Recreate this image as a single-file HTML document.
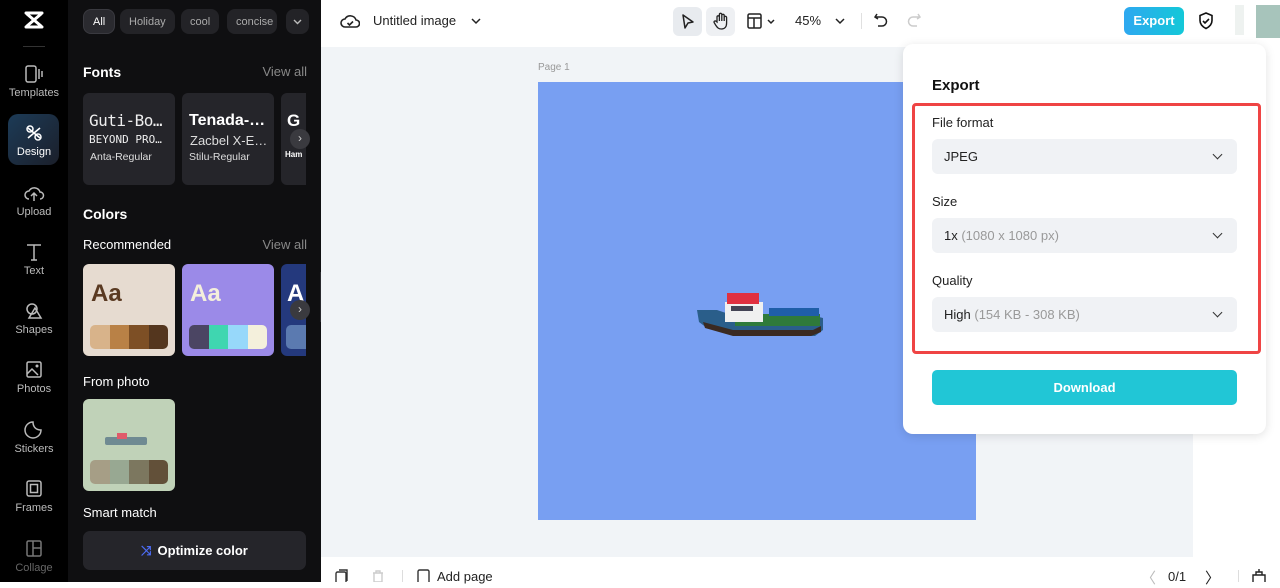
<!DOCTYPE html>
<html><head><meta charset="utf-8"><style>
*{box-sizing:border-box;margin:0;padding:0}
body{width:1280px;height:582px;overflow:hidden;font-family:"Liberation Sans",sans-serif;background:#fff;position:relative}
.abs{position:absolute}
.rail{left:0;top:0;width:68px;height:582px;background:#000}
.ri{position:absolute;left:0;width:68px;text-align:center;color:#bbb;font-size:11px}
.ri svg{display:block;margin:0 auto 4px}
.panel{left:68px;top:0;width:253px;height:582px;background:#0f0f11;color:#fff}
.chip{position:absolute;top:9px;height:25px;border-radius:8px;background:#232327;color:#aaa;font-size:11px;display:flex;align-items:center;padding:0 9px;white-space:nowrap}
.h{position:absolute;font-weight:bold;font-size:14px;color:#fff}
.va{position:absolute;right:14px;font-size:13px;color:#888}
.card{position:absolute;width:92px;height:92px;border-radius:6px;background:#25252a}
.pal{position:absolute;left:7px;bottom:7px;width:78px;height:24px;border-radius:5px;overflow:hidden;display:flex}
.pal i{flex:1}
.sel{position:absolute;left:932px;width:305px;height:35px;background:#f0f2f5;border-radius:6px;font-size:13px;color:#222;line-height:35px;padding-left:12px}
.sel:after{content:"";position:absolute;right:16px;top:12px;width:6px;height:6px;border-right:1.6px solid #333;border-bottom:1.6px solid #333;transform:rotate(45deg)}
.lab{position:absolute;left:932px;font-size:13px;color:#222}
.g{color:#999}
</style></head><body>
<div class="abs rail">
 <svg class="abs" style="left:22px;top:10px" width="24" height="20" viewBox="0 0 24 20"><path d="M4 3h16M4 17h16M5 4L19 16M19 4L5 16" stroke="#fff" stroke-width="3" fill="none" stroke-linecap="round"/></svg>
 <div class="abs" style="left:23px;top:46px;width:22px;height:1px;background:#333"></div>
 <div class="ri" style="top:65px"><svg width="20" height="18"><rect x="2" y="1" width="10" height="16" rx="2" stroke="#bbb" fill="none" stroke-width="1.5"/><path d="M15 4v10M18 6v6" stroke="#bbb" stroke-width="1.5"/></svg>Templates</div>
 <div class="abs" style="left:8px;top:114px;width:51px;height:51px;border-radius:10px;background:linear-gradient(135deg,#1c3b57,#1b1f2a)"></div>
 <div class="ri" style="top:124px;color:#fff"><svg width="20" height="18"><path d="M4 4l12 10M16 4L4 14" stroke="#fff" stroke-width="1.6"/><circle cx="6" cy="5" r="3" stroke="#fff" fill="none" stroke-width="1.5"/><circle cx="14" cy="13" r="3" stroke="#fff" fill="none" stroke-width="1.5"/></svg>Design</div>
 <div class="ri" style="top:184px"><svg width="22" height="18"><path d="M6 15a4 4 0 0 1 0-8 6 6 0 0 1 11 1 3.5 3.5 0 0 1 0 7M11 9v8M8 12l3-3 3 3" stroke="#bbb" fill="none" stroke-width="1.5"/></svg>Upload</div>
 <div class="ri" style="top:243px"><svg width="20" height="18"><path d="M3 2h14M10 2v15M7 17h6" stroke="#bbb" stroke-width="1.5"/></svg>Text</div>
 <div class="ri" style="top:302px"><svg width="20" height="18"><circle cx="8" cy="7" r="5" stroke="#bbb" fill="none" stroke-width="1.5"/><path d="M11 6l6 10H5z" stroke="#bbb" fill="none" stroke-width="1.5"/></svg>Shapes</div>
 <div class="ri" style="top:361px"><svg width="20" height="18"><rect x="3" y="1" width="14" height="15" rx="1.5" stroke="#bbb" fill="none" stroke-width="1.5"/><path d="M3 13l5-5 6 6" stroke="#bbb" fill="none" stroke-width="1.5"/><circle cx="13" cy="5" r="1.5" fill="#bbb"/></svg>Photos</div>
 <div class="ri" style="top:421px"><svg width="20" height="18"><path d="M17 9a8 8 0 1 1-8-8c0 5 3 8 8 8z" stroke="#bbb" fill="none" stroke-width="1.5"/></svg>Stickers</div>
 <div class="ri" style="top:480px"><svg width="20" height="18"><rect x="3" y="1" width="14" height="15" rx="2" stroke="#bbb" fill="none" stroke-width="1.5"/><rect x="6.5" y="4.5" width="7" height="8" stroke="#bbb" fill="none" stroke-width="1.5"/></svg>Frames</div>
 <div class="ri" style="top:540px;color:#666"><svg width="20" height="18"><rect x="3" y="1" width="14" height="15" rx="1.5" stroke="#777" fill="none" stroke-width="1.5"/><path d="M9 1v15M9 8h8" stroke="#777" stroke-width="1.5"/></svg>Collage</div>
</div>
<div class="abs panel">
 <div class="chip" style="left:15px;background:#2a2a2f;color:#fff;border:1px solid #3a3a40">All</div>
 <div class="chip" style="left:52px">Holiday</div>
 <div class="chip" style="left:113px">cool</div>
 <div class="chip" style="left:159px;width:50px;overflow:hidden">concise</div>
 <div class="chip" style="left:218px;width:23px;padding:0"><svg width="23" height="25"><path d="M8 11l3.5 3.5L15 11" stroke="#bbb" fill="none" stroke-width="1.4"/></svg></div>
 <div class="h" style="left:15px;top:64px">Fonts</div><div class="va" style="top:64px">View all</div>
 <div class="card" style="left:15px;top:93px"><div style="position:absolute;left:6px;top:18px;font-family:'DejaVu Sans Mono';font-size:16px;color:#eee;letter-spacing:-0.5px">Guti-Bo…</div><div style="position:absolute;left:6px;top:40px;font-family:'DejaVu Sans Mono';font-size:11px;color:#eee">BEYOND PRO…</div><div style="position:absolute;left:7px;top:58px;font-size:10.5px;color:#ddd">Anta-Regular</div></div>
 <div class="card" style="left:114px;top:93px"><div style="position:absolute;left:7px;top:19px;font-weight:bold;font-size:16px;color:#fff">Tenada-…</div><div style="position:absolute;left:8px;top:40px;font-size:13px;color:#ddd">Zacbel X-E…</div><div style="position:absolute;left:7px;top:58px;font-size:10.5px;color:#ddd">Stilu-Regular</div></div>
 <div class="card" style="left:213px;top:93px;width:25px;border-radius:6px 0 0 6px;overflow:hidden"><div style="position:absolute;left:6px;top:18px;font-weight:bold;font-size:17px">G</div><div style="position:absolute;left:4px;top:57px;font-size:8px;font-weight:bold">Ham</div></div>
 <div class="abs" style="left:222px;top:129px;width:20px;height:20px;border-radius:10px;background:#3a3a3f;color:#ccc;font-size:12px;text-align:center;line-height:19px">›</div>
 <div class="h" style="left:15px;top:206px">Colors</div>
 <div class="abs" style="left:15px;top:237px;font-size:13px">Recommended</div><div class="va" style="top:237px">View all</div>
 <div class="card" style="left:15px;top:264px;background:#e6dbd0"><div style="position:absolute;left:8px;top:16px;font-size:24px;font-weight:bold;color:#5a3a22">Aa</div><div class="pal"><i style="background:#d8b38a"></i><i style="background:#b98146"></i><i style="background:#7d4f25"></i><i style="background:#54361e"></i></div></div>
 <div class="card" style="left:114px;top:264px;background:#9b8ae8"><div style="position:absolute;left:8px;top:16px;font-size:24px;font-weight:bold;color:#f4efdc">Aa</div><div class="pal"><i style="background:#4b4563"></i><i style="background:#3fd6b0"></i><i style="background:#97d8fa"></i><i style="background:#f4f0dc"></i></div></div>
 <div class="card" style="left:213px;top:264px;width:25px;background:#24397d;border-radius:6px 0 0 6px;overflow:hidden"><div style="position:absolute;left:6px;top:16px;font-size:24px;font-weight:bold">A</div><div style="position:absolute;left:5px;bottom:7px;width:20px;height:24px;background:#5b7ab0;border-radius:5px 0 0 5px"></div></div>
 <div class="abs" style="left:222px;top:300px;width:20px;height:20px;border-radius:10px;background:#3a3a3f;color:#ccc;font-size:12px;text-align:center;line-height:19px">›</div>
 <div class="abs" style="left:15px;top:374px;font-size:13px">From photo</div>
 <div class="card" style="left:15px;top:399px;background:#c0d2b8"><div style="position:absolute;left:22px;top:38px;width:42px;height:8px;background:#6f8a92;border-radius:2px"></div><div style="position:absolute;left:34px;top:34px;width:10px;height:6px;background:#e05a6a"></div><div class="pal"><i style="background:#a69e86"></i><i style="background:#98a892"></i><i style="background:#7c775f"></i><i style="background:#625039"></i></div></div>
 <div class="abs" style="left:15px;top:505px;font-size:13px">Smart match</div>
 <div class="abs" style="left:15px;top:531px;width:223px;height:39px;border-radius:7px;background:#25252a;text-align:center;line-height:39px;font-size:13px;font-weight:bold"><span style="color:#4c6cf5;margin-right:6px">⤨</span>Optimize color</div>
</div>
<div class="abs" style="left:320px;top:272px;width:8px;height:50px;background:#2a2a2e;border-radius:0 6px 6px 0"></div>
<svg class="abs" style="left:340px;top:12px" width="20" height="18"><path d="M5 15a4 4 0 0 1 0-8 6 6 0 0 1 11 1 3.5 3.5 0 0 1 0 7z" stroke="#222" fill="none" stroke-width="1.6"/><path d="M7.5 11l2 2 3.5-3.5" stroke="#222" fill="none" stroke-width="1.6"/></svg>
<div class="abs" style="left:373px;top:13px;font-size:13px;color:#222">Untitled image</div>
<svg class="abs" style="left:470px;top:15px" width="12" height="12"><path d="M2 4l4 4 4-4" stroke="#222" fill="none" stroke-width="1.5"/></svg>
<div class="abs" style="left:673px;top:7px;width:29px;height:29px;border-radius:6px;background:#e8ebef"></div>
<div class="abs" style="left:706px;top:7px;width:29px;height:29px;border-radius:6px;background:#eef0f3"></div>
<svg class="abs" style="left:680px;top:13px" width="16" height="17"><path d="M3 2l10 7-5 1-3 5z" stroke="#222" fill="none" stroke-width="1.5" stroke-linejoin="round"/></svg>
<svg class="abs" style="left:712px;top:11px" width="18" height="20"><path d="M5 11V6a1.2 1.2 0 0 1 2.4 0V10V3.5a1.2 1.2 0 0 1 2.4 0V10V4.5a1.2 1.2 0 0 1 2.4 0V10V6.5a1.2 1.2 0 0 1 2.4 0V12c0 4-2 6-5 6s-4-1-6-4l-1.5-2.5a1.2 1.2 0 0 1 2-1.2z" stroke="#222" fill="none" stroke-width="1.3"/></svg>
<svg class="abs" style="left:747px;top:13px" width="32" height="16"><rect x="1" y="1" width="13" height="14" rx="1.5" stroke="#222" fill="none" stroke-width="1.5"/><path d="M1 5h13M7 5v10M21 7l3 3 3-3" stroke="#222" fill="none" stroke-width="1.5"/></svg>
<div class="abs" style="left:795px;top:13px;font-size:13px;color:#222">45%</div>
<svg class="abs" style="left:834px;top:15px" width="12" height="12"><path d="M2 4l4 4 4-4" stroke="#222" fill="none" stroke-width="1.5"/></svg>
<div class="abs" style="left:861px;top:13px;width:1px;height:16px;background:#e0e0e0"></div>
<svg class="abs" style="left:873px;top:12px" width="16" height="17"><path d="M4 2L2 5l3 2M2 5h7a4.5 4.5 0 0 1 0 9H5" stroke="#222" fill="none" stroke-width="1.5"/></svg>
<svg class="abs" style="left:906px;top:12px" width="16" height="17"><path d="M12 2l2 3-3 2M14 5H7a4.5 4.5 0 0 0 0 9h4" stroke="#ccc" fill="none" stroke-width="1.5"/></svg>
<div class="abs" style="left:1124px;top:7px;width:60px;height:28px;border-radius:6px;background:linear-gradient(90deg,#2ea8f0,#13c8d8);color:#fff;font-weight:bold;font-size:13px;text-align:center;line-height:28px">Export</div>
<svg class="abs" style="left:1197px;top:11px" width="18" height="20"><path d="M9 2l6 2.5v5c0 4-3 6.5-6 8-3-1.5-6-4-6-8v-5z" stroke="#111" fill="none" stroke-width="1.6"/><path d="M6 10l2 2 4-4" stroke="#111" fill="none" stroke-width="1.6"/></svg>
<div class="abs" style="left:1235px;top:5px;width:9px;height:30px;background:#eef2f0"></div>
<div class="abs" style="left:1256px;top:5px;width:24px;height:33px;background:#a7c4bb"></div>
<div class="abs" style="left:321px;top:47px;width:872px;height:510px;background:#f1f4f7"></div>
<div class="abs" style="left:538px;top:62px;font-size:10px;color:#999">Page 1</div>
<div class="abs" style="left:538px;top:82px;width:438px;height:438px;background:#789ff2"></div>
<svg class="abs" style="left:695px;top:288px" width="132" height="52" viewBox="0 0 132 52">
<path d="M2 22h20l18 6h80l8 2v12l-8 6H40L12 40 4 34z" fill="#2a5e8a"/>
<path d="M8 34l30 8h80l8-4v6l-10 4H38L10 40z" fill="#3a2a22"/>
<path d="M40 26h85v12H40z" fill="#2f7a3a"/>
<rect x="30" y="14" width="38" height="20" fill="#f0f0f0"/>
<rect x="32" y="5" width="32" height="11" fill="#e03040"/>
<rect x="36" y="18" width="22" height="5" fill="#445"/>
<path d="M74 20h50v8H74z" fill="#1f5ea8"/>
</svg>
<div class="abs" style="left:903px;top:44px;width:363px;height:390px;background:#fff;border-radius:10px;box-shadow:0 2px 10px rgba(0,0,0,.12)"></div>
<div class="abs" style="left:932px;top:77px;font-weight:bold;font-size:15px;color:#111">Export</div>
<div class="abs" style="left:912px;top:103px;width:349px;height:251px;border:3px solid #ef4444;border-radius:4px"></div>
<div class="lab" style="top:115px">File format</div>
<div class="sel" style="top:139px">JPEG</div>
<div class="lab" style="top:194px">Size</div>
<div class="sel" style="top:218px">1x <span class="g">(1080 x 1080 px)</span></div>
<div class="lab" style="top:273px">Quality</div>
<div class="sel" style="top:297px">High <span class="g">(154 KB - 308 KB)</span></div>
<div class="abs" style="left:932px;top:370px;width:305px;height:35px;border-radius:5px;background:#21c6d6;color:#fff;font-size:13px;font-weight:bold;text-align:center;line-height:35px">Download</div>
<svg class="abs" style="left:334px;top:569px" width="16" height="13"><rect x="2" y="3" width="10" height="12" rx="1.5" stroke="#333" fill="none" stroke-width="1.4"/><path d="M5 1h8v11" stroke="#333" fill="none" stroke-width="1.4"/></svg>
<svg class="abs" style="left:371px;top:569px" width="14" height="13"><path d="M2 4h10M5 4V2h4v2M3 4v9h8V4" stroke="#ccc" fill="none" stroke-width="1.4"/></svg>
<div class="abs" style="left:402px;top:570px;width:1px;height:12px;background:#ddd"></div>
<svg class="abs" style="left:416px;top:569px" width="16" height="13"><rect x="2" y="1" width="11" height="14" rx="1.5" stroke="#333" fill="none" stroke-width="1.4"/></svg>
<div class="abs" style="left:437px;top:569px;font-size:13px;color:#222">Add page</div>
<div class="abs" style="left:1141px;top:567px;font-size:15px;color:#bbb">〈</div>
<div class="abs" style="left:1168px;top:569px;font-size:13px;color:#222">0/1</div>
<div class="abs" style="left:1205px;top:567px;font-size:15px;color:#222">〉</div>
<div class="abs" style="left:1238px;top:570px;width:1px;height:12px;background:#ddd"></div>
<svg class="abs" style="left:1251px;top:568px" width="16" height="14"><path d="M2 7h12v8H2zM5 7V4h6v3M8 1v3" stroke="#222" fill="none" stroke-width="1.4"/></svg>
</body></html>
